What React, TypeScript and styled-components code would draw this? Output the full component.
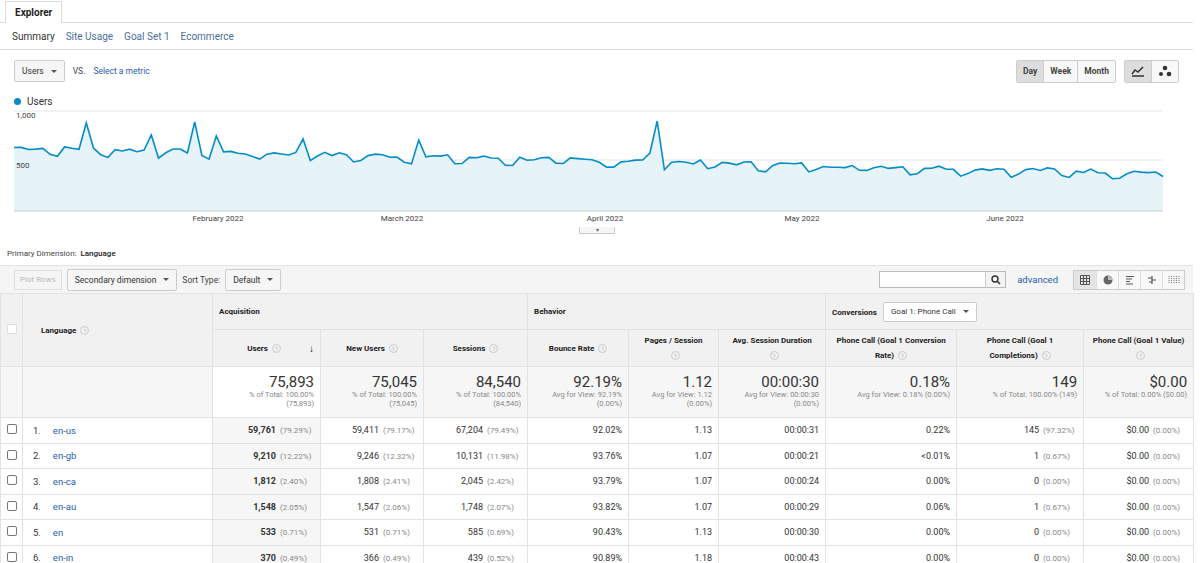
import React from "react";
import styled, { createGlobalStyle } from "styled-components";

const GlobalStyle = createGlobalStyle`
  body { margin: 0; background: #fff; font-family: Roboto, "Liberation Sans", Arial, sans-serif; color: #222; }
  * { box-sizing: border-box; }
`;

const Page = styled.div`
  width: 1200px;
  height: 563px;
  overflow: hidden;
  padding-right: 7px;
`;

const TabBar = styled.div`
  height: 23px;
  border-bottom: 1px solid #ddd;
  padding-left: 5px;
  display: flex;
  align-items: flex-end;
`;

const Tab = styled.div`
  height: 22px;
  padding: 0 9px;
  border: 1px solid #ddd;
  border-bottom: none;
  background: #fff;
  margin-bottom: -1px;
  font-size: 10px;
  font-weight: 700;
  display: flex;
  align-items: center;
`;

const SubNav = styled.div`
  height: 27px;
  display: flex;
  align-items: center;
  gap: 11px;
  padding-left: 12px;
  border-bottom: 1px solid #ddd;
  font-size: 10px;
`;

const SubLink = styled.span<{ $active?: boolean }>`
  color: ${({ $active }) => ($active ? "#333" : "#4a6f9c")};
`;

const Controls = styled.div`
  height: 38px;
  display: flex;
  align-items: center;
  padding: 4px 14px 0;
  gap: 8px;
`;

const Select = styled.div`
  height: 22px;
  padding: 0 7px;
  border: 1px solid #ccc;
  border-radius: 2px;
  background: #f6f6f6;
  font-size: 8.5px;
  color: #333;
  display: flex;
  align-items: center;
  gap: 7px;
  white-space: nowrap;
  &::after { content: ""; border: 3px solid transparent; border-top: 3px solid #555; margin-top: 3px; }
`;

const Small = styled.span<{ $link?: boolean }>`
  font-size: 8.5px;
  color: ${({ $link }) => ($link ? "#2a5db0" : "#444")};
`;

const Spacer = styled.div`flex: 1;`;

const BtnGroup = styled.div`
  display: flex;
  border: 1px solid #ccc;
  border-radius: 2px;
  overflow: hidden;
`;

const GBtn = styled.div<{ $on?: boolean }>`
  height: 21px;
  padding: 0 6px;
  display: flex;
  align-items: center;
  font-size: 8.5px;
  font-weight: 700;
  color: #444;
  background: ${({ $on }) => ($on ? "#ddd" : "#f8f8f8")};
  & + & { border-left: 1px solid #ccc; }
`;

const Legend = styled.div`
  display: flex;
  align-items: center;
  gap: 6px;
  padding: 6px 14px 0;
  height: 20px;
  font-size: 10px;
  color: #333;
`;

const Dot = styled.span`
  width: 7px; height: 7px; border-radius: 50%; background: #058dc7;
`;

const ChartBox = styled.div`
  position: relative;
  height: 133px;
`;

const AxisLabel = styled.span<{ $x: number; $y: number }>`
  position: absolute;
  left: ${({ $x }) => $x}px;
  top: ${({ $y }) => $y}px;
  font-size: 8px;
  color: #444;
  transform: translateX(-50%);
`;

const Handle = styled.div`
  position: absolute;
  left: 579px;
  top: 119px;
  width: 36px;
  height: 7px;
  border: 1px solid #ccc;
  border-top: none;
  background: #f6f6f6;
  font-size: 6px;
  text-align: center;
  line-height: 6px;
  color: #666;
`;

const PrimaryDim = styled.div`
  height: 24px;
  padding: 8px 0 0 7px;
  font-size: 8px;
  color: #444;
  & b { font-weight: 500; color: #222; margin-left: 4px; }
`;

const Toolbar = styled.div`
  height: 28px;
  background: #f5f5f5;
  border-top: 1px solid #e4e4e4;
  display: flex;
  align-items: center;
  gap: 5px;
  padding: 0 8px 0 14px;
`;

const PlotBtn = styled.div`
  height: 20px;
  padding: 0 5px;
  border: 1px solid #e0e0e0;
  font-size: 8px;
  color: #bbb;
  display: flex;
  align-items: center;
`;

const Search = styled.div`
  display: flex;
  height: 17px;
  border: 1px solid #bbb;
  background: #fff;
  width: 127px;
  margin-right: 6px;
  & div { flex: 1; }
  & span { width: 20px; border-left: 1px solid #ccc; background: #f4f4f4; display: flex; align-items: center; justify-content: center; }
`;

const ViewIcons = styled.div`
  display: flex;
  margin-left: 10px;
  border: 1px solid #ccc;
  & span { width: 22px; height: 18px; display: flex; align-items: center; justify-content: center; background: #f8f8f8; }
  & span + span { border-left: 1px solid #ddd; }
  & span:first-child { background: #e4e4e4; }
`;

const Table = styled.table`
  width: 1193px;
  border-collapse: collapse;
  table-layout: fixed;
  font-size: 9px;
  & td, & th { border: 1px solid #e2e2e2; }
`;

const GroupTh = styled.th`
  height: 36px;
  background: #f1f1f1;
  text-align: left;
  padding: 0 6px;
  font-weight: 700;
  font-size: 8px;
  color: #222;
  border-bottom: 1px solid #e2e2e2;
`;

const ColTh = styled.th<{ $align?: string }>`
  height: 37px;
  background: #f1f1f1;
  font-weight: 700;
  font-size: 8px;
  line-height: 15px;
  color: #222;
  text-align: ${({ $align }) => $align || "center"};
  padding: 0 6px;
`;

const Q = styled.span`
  display: inline-block;
  width: 9px; height: 9px;
  border-radius: 50%;
  border: 1px solid #ccc;
  font-size: 6px;
  line-height: 7px;
  text-align: center;
  color: #bbb;
  margin-left: 4px;
  font-weight: 400;
  vertical-align: middle;
`;

const TotalTd = styled.td<{ $shade?: boolean }>`
  height: 51px;
  background: ${({ $shade }) => ($shade ? "#fff" : "#f6f6f6")};
  text-align: right;
  vertical-align: top;
  padding: 7px 6px 0;
  & strong { display: block; font-size: 15px; font-weight: 400; color: #333; line-height: 16px; }
  & small { display: block; font-size: 7.5px; color: #888; line-height: 9px; }
`;

const Td = styled.td<{ $shade?: boolean }>`
  height: 25.5px;
  text-align: right;
  padding: 0 6px;
  color: #333;
  background: ${({ $shade }) => ($shade ? "#f6f6f6" : "#fff")};
  white-space: nowrap;
  & b { font-weight: 700; }
  & i { font-style: normal; color: #888; font-size: 8px; margin-left: 4px; display: inline-block; min-width: 34px; text-align: left; }
`;

const Check = styled.span<{ $dim?: boolean }>`
  display: inline-block;
  width: 10px; height: 10px;
  border: 1px solid ${({ $dim }) => ($dim ? "#ddd" : "#777")};
  border-radius: 2px;
  background: #fff;
`;

const LangTd = styled.td`
  padding-left: 10px;
  color: #333;
  font-size: 9.5px;
  & a { color: #2a5db0; margin-left: 12px; }
`;

function buildData() {
  const vals: number[] = [];
  let seed = 7;
  const rnd = () => {
    seed = (seed * 9301 + 49297) % 233280;
    return seed / 233280;
  };
  const n = 160;
  for (let i = 0; i < n; i++) {
    const base = 560 - (i / n) * 250;
    const weekly = i % 7 === 5 || i % 7 === 6 ? -45 : 15;
    vals.push(base + weekly + (rnd() - 0.5) * 45);
  }
  vals[10] = 820; vals[25] = 830; vals[19] = 700; vals[28] = 690; vals[40] = 660; vals[56] = 650; vals[89] = 840; vals[88] = 520;
  return vals;
}

const data = buildData();

function Chart() {
  const x0 = 14, x1 = 1163, base = 103;
  const pts = data.map((v, i) => {
    const x = x0 + (i / (data.length - 1)) * (x1 - x0);
    const y = base - 6 - (v / 1000) * 100;
    return `${x.toFixed(1)},${y.toFixed(1)}`;
  });
  const line = pts.join(" ");
  return (
    <svg width="1193" height="120" style={{ display: "block" }}>
      <line x1={x0} x2={x1} y1={3} y2={3} stroke="#e6e6e6" />
      <line x1={x0} x2={x1} y1={52} y2={52} stroke="#e6e6e6" />
      <polygon points={`${x0},${base} ${line} ${x1},${base}`} fill="#e6f3f9" />
      <polyline points={line} fill="none" stroke="#058dc7" strokeWidth="1.6" />
      <line x1={x0} x2={x1} y1={base} y2={base} stroke="#ccc" />
      <text x={16} y={10} fontSize="8" fill="#444">1,000</text>
      <text x={16} y={60} fontSize="8" fill="#444">500</text>
    </svg>
  );
}

const rows = [
  ["en-us", "59,761", "(79.29%)", "59,411", "(79.17%)", "67,204", "(79.49%)", "92.02%", "1.13", "00:00:31", "0.22%", "145", "(97.32%)"],
  ["en-gb", "9,210", "(12.22%)", "9,246", "(12.32%)", "10,131", "(11.98%)", "93.76%", "1.07", "00:00:21", "<0.01%", "1", "(0.67%)"],
  ["en-ca", "1,812", "(2.40%)", "1,808", "(2.41%)", "2,045", "(2.42%)", "93.79%", "1.07", "00:00:24", "0.00%", "0", "(0.00%)"],
  ["en-au", "1,548", "(2.05%)", "1,547", "(2.06%)", "1,748", "(2.07%)", "93.82%", "1.07", "00:00:29", "0.06%", "1", "(0.67%)"],
  ["en", "533", "(0.71%)", "531", "(0.71%)", "585", "(0.69%)", "90.43%", "1.13", "00:00:30", "0.00%", "0", "(0.00%)"],
  ["en-in", "370", "(0.49%)", "366", "(0.49%)", "439", "(0.52%)", "90.89%", "1.18", "00:00:43", "0.00%", "0", "(0.00%)"],
];

const cols = [22, 190, 108, 103, 104, 101, 90, 107, 131, 127, 110];

export default function App() {
  return (
    <Page>
      <GlobalStyle />
      <TabBar><Tab>Explorer</Tab></TabBar>
      <SubNav>
        <SubLink $active>Summary</SubLink>
        <SubLink>Site Usage</SubLink>
        <SubLink>Goal Set 1</SubLink>
        <SubLink>Ecommerce</SubLink>
      </SubNav>
      <Controls>
        <Select>Users</Select>
        <Small>VS.</Small>
        <Small $link>Select a metric</Small>
        <Spacer />
        <BtnGroup>
          <GBtn $on>Day</GBtn><GBtn>Week</GBtn><GBtn>Month</GBtn>
        </BtnGroup>
        <BtnGroup>
          <GBtn $on>
            <svg width="14" height="12" viewBox="0 0 14 12"><path d="M1 9 L4 5 L7 7 L12 2" stroke="#333" strokeWidth="1.5" fill="none" /><path d="M1 11 H13" stroke="#333" strokeWidth="1.5" /></svg>
          </GBtn>
          <GBtn>
            <svg width="14" height="12" viewBox="0 0 14 12"><circle cx="7" cy="3" r="2.3" fill="#333" /><circle cx="3" cy="9" r="2" fill="#333" /><circle cx="11" cy="9" r="2.3" fill="#333" /></svg>
          </GBtn>
        </BtnGroup>
      </Controls>
      <Legend><Dot />Users</Legend>
      <ChartBox>
        <Chart />
        <AxisLabel $x={218} $y={106}>February 2022</AxisLabel>
        <AxisLabel $x={402} $y={106}>March 2022</AxisLabel>
        <AxisLabel $x={605} $y={106}>April 2022</AxisLabel>
        <AxisLabel $x={802} $y={106}>May 2022</AxisLabel>
        <AxisLabel $x={1005} $y={106}>June 2022</AxisLabel>
        <Handle>▾</Handle>
      </ChartBox>
      <PrimaryDim>Primary Dimension:<b>Language</b></PrimaryDim>
      <Toolbar>
        <PlotBtn>Plot Rows</PlotBtn>
        <Select>Secondary dimension</Select>
        <Small>Sort Type:</Small>
        <Select>Default</Select>
        <Spacer />
        <Search>
          <div />
          <span>
            <svg width="10" height="10" viewBox="0 0 10 10"><circle cx="4" cy="4" r="3" stroke="#333" strokeWidth="1.4" fill="none" /><path d="M6.2 6.2 L9 9" stroke="#333" strokeWidth="1.6" /></svg>
          </span>
        </Search>
        <Small $link style={{ fontSize: 9.5 }}>advanced</Small>
        <ViewIcons>
          <span><svg width="10" height="10" viewBox="0 0 10 10"><path d="M0.5 0.5h9v9h-9z M0.5 3.5h9 M0.5 6.5h9 M3.5 0.5v9 M6.5 0.5v9" stroke="#555" fill="none" /></svg></span>
          <span><svg width="10" height="10" viewBox="0 0 10 10"><circle cx="5" cy="5" r="4.5" fill="#666" /><path d="M5 5V0.5A4.5 4.5 0 0 1 9.5 5Z" fill="#bbb" /></svg></span>
          <span><svg width="10" height="10" viewBox="0 0 10 10"><path d="M1 1.5h8M1 4h6M1 6.5h4M1 9h7" stroke="#555" strokeWidth="1.2" /></svg></span>
          <span><svg width="10" height="10" viewBox="0 0 10 10"><path d="M1 3h4M5 1v8M5 5h4M2 7h3" stroke="#555" strokeWidth="1.2" /></svg></span>
          <span><svg width="12" height="10" viewBox="0 0 12 10"><path d="M1 1v8M3.5 1v8M6 1v8M8.5 1v8M11 1v8" stroke="#777" strokeDasharray="1 1" /></svg></span>
        </ViewIcons>
      </Toolbar>
      <Table>
        <colgroup>{cols.map((w, i) => <col key={i} style={{ width: w }} />)}</colgroup>
        <thead>
          <tr>
            <GroupTh rowSpan={2} style={{ textAlign: "center", padding: 0 }}><Check $dim /></GroupTh>
            <ColTh rowSpan={2} $align="left" style={{ paddingLeft: 18 }}>Language<Q>?</Q></ColTh>
            <GroupTh colSpan={3}>Acquisition</GroupTh>
            <GroupTh colSpan={3}>Behavior</GroupTh>
            <GroupTh colSpan={3}>
              Conversions
              <Select style={{ display: "inline-flex", marginLeft: 6, height: 20, background: "#fff", fontWeight: 400, fontSize: 8 }}>Goal 1: Phone Call</Select>
            </GroupTh>
          </tr>
          <tr>
            <ColTh>Users<Q>?</Q><span style={{ float: "right", fontSize: 10 }}>↓</span></ColTh>
            <ColTh>New Users<Q>?</Q></ColTh>
            <ColTh>Sessions<Q>?</Q></ColTh>
            <ColTh>Bounce Rate<Q>?</Q></ColTh>
            <ColTh>Pages / Session<br /><Q>?</Q></ColTh>
            <ColTh>Avg. Session Duration<br /><Q>?</Q></ColTh>
            <ColTh>Phone Call (Goal 1 Conversion Rate)<Q>?</Q></ColTh>
            <ColTh>Phone Call (Goal 1 Completions)<Q>?</Q></ColTh>
            <ColTh>Phone Call (Goal 1 Value)<br /><Q>?</Q></ColTh>
          </tr>
        </thead>
        <tbody>
          <tr>
            <TotalTd /><TotalTd />
            <TotalTd $shade><strong>75,893</strong><small>% of Total: 100.00%</small><small>(75,893)</small></TotalTd>
            <TotalTd><strong>75,045</strong><small>% of Total: 100.00%</small><small>(75,045)</small></TotalTd>
            <TotalTd><strong>84,540</strong><small>% of Total: 100.00%</small><small>(84,540)</small></TotalTd>
            <TotalTd><strong>92.19%</strong><small>Avg for View: 92.19%</small><small>(0.00%)</small></TotalTd>
            <TotalTd><strong>1.12</strong><small>Avg for View: 1.12</small><small>(0.00%)</small></TotalTd>
            <TotalTd><strong>00:00:30</strong><small>Avg for View: 00:00:30</small><small>(0.00%)</small></TotalTd>
            <TotalTd><strong>0.18%</strong><small>Avg for View: 0.18% (0.00%)</small></TotalTd>
            <TotalTd><strong>149</strong><small>% of Total: 100.00% (149)</small></TotalTd>
            <TotalTd><strong>$0.00</strong><small>% of Total: 0.00% ($0.00)</small></TotalTd>
          </tr>
          {rows.map((r, i) => (
            <tr key={r[0]}>
              <Td style={{ textAlign: "center", padding: 0 }}><Check /></Td>
              <LangTd>{i + 1}.<a>{r[0]}</a></LangTd>
              <Td $shade><b>{r[1]}</b><i>{r[2]}</i></Td>
              <Td>{r[3]}<i>{r[4]}</i></Td>
              <Td>{r[5]}<i>{r[6]}</i></Td>
              <Td>{r[7]}</Td>
              <Td>{r[8]}</Td>
              <Td>{r[9]}</Td>
              <Td>{r[10]}</Td>
              <Td>{r[11]}<i>{r[12]}</i></Td>
              <Td>$0.00<i>(0.00%)</i></Td>
            </tr>
          ))}
        </tbody>
      </Table>
    </Page>
  );
}
